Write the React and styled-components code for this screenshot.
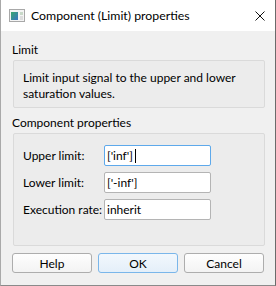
import React from 'react';
import styled, { createGlobalStyle } from 'styled-components';

const GlobalStyle = createGlobalStyle`
  * { box-sizing: border-box; }
  body {
    margin: 0;
    background: #ffffff;
    font-family: "Segoe UI", Lato, "Noto Sans", sans-serif;
    font-size: 12px;
    color: #000000;
  }
`;

const Window = styled.div`
  width: 276px;
  height: 286px;
  display: flex;
  flex-direction: column;
  border-left: 1px solid #a9a9a9;
  border-right: 1px solid #6b6b6b;
  border-bottom: 1px solid #8a8a8a;
  background: #f0f0f0;
`;

const TitleBar = styled.header`
  height: 31px;
  flex: none;
  display: flex;
  align-items: center;
  background: #ffffff;
  padding: 0 10px 0 8px;
`;

const TitleText = styled.span`
  flex: 1;
  margin-left: 6px;
  font-size: 12.3px;
  line-height: 16px;
`;

const Body = styled.main`
  flex: 1;
  display: flex;
  flex-direction: column;
  padding: 11px 10px 0 11px;
`;

const GroupLabel = styled.p`
  margin: 0 0 2px;
  line-height: 16px;
`;

const GroupBox = styled.section`
  margin-left: 1px;
  border: 1px solid #dadada;
  border-radius: 2px;
  background: #ececec;
  padding: ${(p) => p.$padding};
  margin-bottom: ${(p) => p.$gap}px;
`;

const Description = styled.p`
  margin: 0;
  line-height: 16px;
`;

const Form = styled.div`
  display: grid;
  grid-template-columns: 81px 107px;
  row-gap: 6px;
  align-items: center;
`;

const Label = styled.label`
  line-height: 16px;
  white-space: nowrap;
`;

const Input = styled.div`
  height: 21px;
  display: flex;
  align-items: center;
  padding: 0 2px;
  background: #ffffff;
  border: 1px solid ${(p) => (p.$focused ? '#5ea9eb' : '#b4b4b4')};
  border-radius: 2px;
  line-height: 16px;
  white-space: nowrap;
`;

const Caret = styled.span`
  display: inline-block;
  width: 1px;
  height: 14px;
  margin-left: 2px;
  background: #000000;
`;

const ButtonRow = styled.footer`
  display: flex;
  gap: 6px;
  margin-top: 7px;
`;

const Button = styled.button`
  width: 80px;
  height: 20px;
  padding: 0;
  font: inherit;
  color: #000000;
  border: 1px solid ${(p) => (p.$primary ? '#7ab6ea' : '#adadad')};
  border-radius: 3px;
  background: ${(p) =>
    p.$primary
      ? 'linear-gradient(#f2f8fd, #e4eff9)'
      : 'linear-gradient(#fefefe, #f3f3f3)'};
`;

const AppIcon = () => (
  <svg width="16" height="13" viewBox="0 0 16 13">
    <rect x="0.5" y="0.5" width="15" height="12" fill="#f4f4f4" stroke="#a8a8a8" />
    <defs>
      <linearGradient id="blk" x1="0" y1="0" x2="1" y2="1">
        <stop offset="0" stopColor="#3aa76d" />
        <stop offset="1" stopColor="#3a74c4" />
      </linearGradient>
    </defs>
    <rect x="2" y="3" width="7" height="8" fill="url(#blk)" />
    <rect x="11" y="3" width="3" height="3" fill="#c8d8c8" />
    <rect x="11" y="7" width="3" height="4" fill="#dddddd" />
  </svg>
);

const CloseIcon = () => (
  <svg width="10" height="10" viewBox="0 0 10 10">
    <path d="M0.5 0.5 L9.5 9.5 M9.5 0.5 L0.5 9.5" stroke="#111" strokeWidth="1" />
  </svg>
);

const App = () => (
  <>
    <GlobalStyle />
    <Window>
      <TitleBar>
        <AppIcon />
        <TitleText>Component (Limit) properties</TitleText>
        <CloseIcon />
      </TitleBar>
      <Body>
        <GroupLabel>Limit</GroupLabel>
        <GroupBox $padding="9px 9px 5px" $gap={7}>
          <Description>
            Limit input signal to the upper and lower
            <br />
            saturation values.
          </Description>
        </GroupBox>
        <GroupLabel>Component properties</GroupLabel>
        <GroupBox $padding="11px 9px 25px">
          <Form>
            <Label>Upper limit:</Label>
            <Input $focused>
              ['inf']
              <Caret />
            </Input>
            <Label>Lower limit:</Label>
            <Input>['-inf']</Input>
            <Label>Execution rate:</Label>
            <Input>inherit</Input>
          </Form>
        </GroupBox>
        <ButtonRow>
          <Button>Help</Button>
          <Button $primary>OK</Button>
          <Button>Cancel</Button>
        </ButtonRow>
      </Body>
    </Window>
  </>
);

export default App;
